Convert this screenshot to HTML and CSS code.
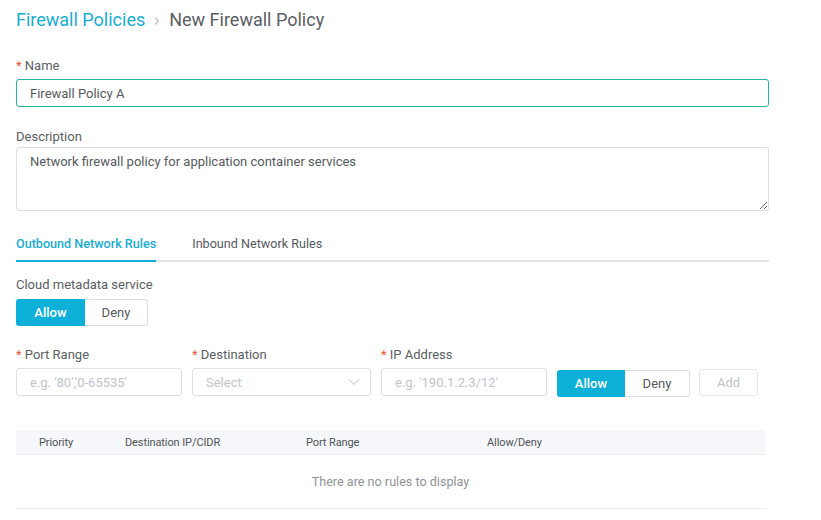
FILE: index.html
```html
<!DOCTYPE html>
<html>
<head>
<meta charset="utf-8">
<link rel="stylesheet" href="styles.css">
</head>
<body>
<div class="page">
  <div class="crumbs">
    <span class="crumb-link">Firewall Policies</span>
    <svg class="crumb-sep" width="8" height="10" viewBox="0 0 8 10"><path d="M2 1.5 L5.5 5 L2 8.5" fill="none" stroke="#b8bcc2" stroke-width="1.2"/></svg>
    <span class="crumb-current">New Firewall Policy</span>
  </div>

  <div class="field field-name">
    <label class="label"><span class="req">*</span> Name</label>
    <input class="input input-active" type="text" value="Firewall Policy A">
  </div>

  <div class="field field-desc">
    <label class="label">Description</label>
    <textarea class="textarea">Network firewall policy for application container services</textarea>
  </div>

  <div class="tabs">
    <div class="tab tab-active">Outbound Network Rules</div>
    <div class="tab">Inbound Network Rules</div>
  </div>

  <div class="field field-cloud">
    <label class="label">Cloud metadata service</label>
    <div class="toggle toggle-cloud">
      <div class="tbtn tbtn-on">Allow</div>
      <div class="tbtn tbtn-off">Deny</div>
    </div>
  </div>

  <div class="rule-row">
    <div class="field col-port">
      <label class="label"><span class="req">*</span> Port Range</label>
      <input class="input" type="text" placeholder="e.g. '80','0-65535'">
    </div>
    <div class="field col-dest">
      <label class="label"><span class="req">*</span> Destination</label>
      <div class="input select">
        <span class="placeholder">Select</span>
        <svg width="12" height="8" viewBox="0 0 12 8"><path d="M1 1.5 L6 6.5 L11 1.5" fill="none" stroke="#b3b8bf" stroke-width="1"/></svg>
      </div>
    </div>
    <div class="field col-ip">
      <label class="label"><span class="req">*</span> IP Address</label>
      <input class="input" type="text" placeholder="e.g. '190.1.2.3/12'">
    </div>
    <div class="toggle toggle-rule">
      <div class="tbtn tbtn-on rbtn-allow">Allow</div>
      <div class="tbtn tbtn-off rbtn-deny">Deny</div>
    </div>
    <div class="add-btn">Add</div>
  </div>

  <div class="table">
    <div class="thead">
      <div class="th th-pri">Priority</div>
      <div class="th th-dest">Destination IP/CIDR</div>
      <div class="th th-port">Port Range</div>
      <div class="th th-ad">Allow/Deny</div>
    </div>
    <div class="empty">There are no rules to display</div>
  </div>
</div>
</body>
</html>
```
FILE: styles.css
```css
* { box-sizing: border-box; }
html, body { margin: 0; padding: 0; background: #fff; }
body {
  font-family: Roboto, "Noto Sans", "Liberation Sans", sans-serif;
  color: #555a60;
}
.page {
  width: 769px;
  padding: 8px 0 0 16px;
  display: flex;
  flex-direction: column;
}
.crumbs {
  display: flex;
  align-items: center;
  height: 24px;
  font-size: 18px;
  line-height: 24px;
}
.crumb-link { color: #19acd2; }
.crumb-sep { margin: 2px 8px 0 8px; }
.crumb-current { color: #5a5e63; }

.field { display: flex; flex-direction: column; }
.label {
  font-size: 13px;
  line-height: 18px;
  color: #5a5e63;
  margin-bottom: 4px;
}
.req { color: #f2553a; }
.field-name { margin-top: 25px; }
.field-desc { margin-top: 21px; }
.field-desc .label { margin-bottom: 1px; }

.input {
  height: 28px;
  border: 1px solid #dcdfe6;
  border-radius: 3px;
  padding: 0 13px;
  font-family: inherit;
  font-size: 13px;
  color: #555a60;
  outline: none;
  background: #fff;
}
.input::placeholder { color: #c0c4cc; }
.input-active { border-color: #26b49e; }
.textarea {
  height: 64px;
  border: 1px solid #dcdfe6;
  border-radius: 3px;
  padding: 6px 13px;
  font-family: inherit;
  font-size: 13px;
  line-height: 16px;
  color: #555a60;
  resize: vertical;
  outline: none;
}

.tabs {
  margin-top: 23px;
  display: flex;
  border-bottom: 2px solid #e3e7eb;
}
.tab {
  font-size: 12.6px;
  line-height: 18px;
  padding-top: 1px;
  padding-bottom: 7px;
  margin-bottom: -2px;
  border-bottom: 2px solid transparent;
  color: #55595e;
  margin-right: 36px;
}
.tab-active {
  color: #19acd2;
  font-weight: 500;
  border-bottom-color: #12aed6;
}

.field-cloud { margin-top: 14px; }
.field-cloud .label { margin-bottom: 5px; }
.toggle { display: flex; }
.tbtn {
  height: 27px;
  font-size: 13px;
  display: flex;
  align-items: center;
  justify-content: center;
}
.tbtn-on {
  background: #0db0d8;
  color: #fff;
  font-weight: 500;
  border-radius: 3px 0 0 3px;
}
.tbtn-off {
  border: 1px solid #dcdfe6;
  border-left: none;
  border-radius: 0 3px 3px 0;
  color: #55595e;
}
.toggle-cloud .tbtn-on { width: 69px; }
.toggle-cloud .tbtn-off { width: 63px; }

.rule-row {
  margin-top: 20px;
  display: flex;
  align-items: flex-end;
}
.col-port { width: 166px; }
.col-dest { width: 179px; margin-left: 10px; }
.col-ip { width: 166px; margin-left: 10px; }
.rule-row .input { width: 100%; }
.select {
  display: flex;
  align-items: center;
  justify-content: space-between;
  padding-right: 10px;
}
.placeholder { color: #c0c4cc; }
.toggle-rule { margin-left: 10px; margin-bottom: -1px; }
.rbtn-allow { width: 68px; }
.rbtn-deny { width: 65px; }
.add-btn {
  margin-left: 9px;
  width: 59px;
  height: 27px;
  border: 1px solid #e4e7ed;
  border-radius: 3px;
  font-size: 13px;
  color: #c0c4cc;
  display: flex;
  align-items: center;
  justify-content: center;
}

.table {
  margin-top: 34px;
  width: 749px;
  border-bottom: 1px solid #e8ebf0;
}
.thead {
  display: flex;
  height: 25px;
  align-items: center;
  background: #f5f7fa;
  border-bottom: 1px solid #e8ebf0;
  font-size: 11px;
  color: #4f5358;
}
.th { letter-spacing: -0.1px; }
.th-pri { width: 109px; padding-left: 23px; }
.th-dest { width: 181px; }
.th-port { width: 181px; }
.th-ad { flex: 1; }
.empty {
  height: 53px;
  display: flex;
  align-items: center;
  justify-content: center;
  font-size: 12.6px;
  color: #909399;
}
```
